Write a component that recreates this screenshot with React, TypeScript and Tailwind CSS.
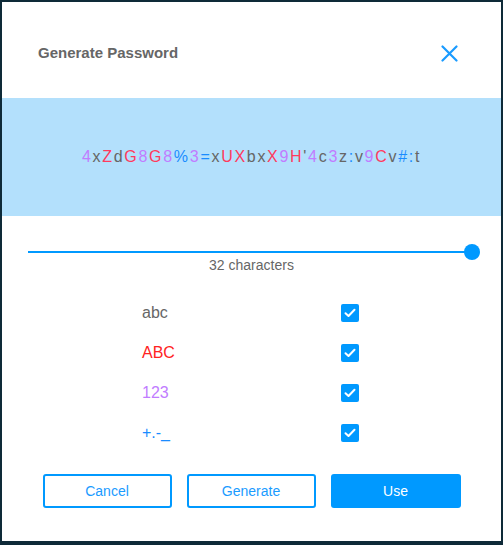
import React from "react";

const PW = "4xZdG8G8%3=xUXbxX9H'4c3z:v9Cv#:t";

function colorFor(c: string): string {
  if (/[0-9]/.test(c)) return "text-[#c17cff]";
  if (/[A-Z]/.test(c)) return "text-[#ff3a5e]";
  if (/[a-z]/.test(c)) return "text-[#666666]";
  if (c === "'") return "text-[#666666]";
  return "text-[#1a8cff]";
}

function Check() {
  return (
    <div className="w-[18px] h-[18px] rounded-[2px] bg-[#0099ff] flex items-center justify-center">
      <svg width="12" height="10" viewBox="0 0 12 10" fill="none">
        <path d="M1.5 5.2 L4.5 8 L10.5 1.8" stroke="white" strokeWidth="2" strokeLinecap="round" strokeLinejoin="round" />
      </svg>
    </div>
  );
}

export default function App() {
  const rows = [
    { label: "abc", cls: "text-[#666666]" },
    { label: "ABC", cls: "text-[#ff2222]" },
    { label: "123", cls: "text-[#c17cff]" },
    { label: "+.-_", cls: "text-[#1a8cff]" },
  ];
  return (
    <div
      className="w-[503px] h-[545px] bg-[#0e2a38] pt-[2px] pl-[2px] pr-[2px]"
      style={{ fontFamily: '"Liberation Sans", Arial, sans-serif' }}
    >
      <div className="w-[499px] h-[539px] bg-white flex flex-col">
        <div className="h-[96px] flex items-center justify-between pl-[36px] pr-[43px] pt-[7px]">
          <div className="text-[15px] font-bold text-[#666666]">Generate Password</div>
          <svg width="17" height="17" viewBox="0 0 17 17">
            <path d="M1.5 1.5 L15.5 15.5 M15.5 1.5 L1.5 15.5" stroke="#1a9bff" strokeWidth="2.2" strokeLinecap="round" />
          </svg>
        </div>
        <div className="h-[118px] bg-[#b3e0fc] flex items-center justify-center">
          <div className="text-[16px] tracking-[1.7px] leading-none">
            {PW.split("").map((c, i) => (
              <span key={i} className={colorFor(c)}>
                {c}
              </span>
            ))}
          </div>
        </div>
        <div className="mt-[28px] ml-[26px] mr-[29px] h-[16px] relative flex items-center">
          <div className="h-[2px] w-full bg-[#0099ff]" />
          <div className="absolute right-[-8px] top-0 w-[16px] h-[16px] rounded-full bg-[#0099ff]" />
        </div>
        <div className="-mt-[3px] text-center text-[14px] leading-[16px] text-[#666666]">32 characters</div>
        <div className="mt-[20px] flex flex-col">
          {rows.map((r) => (
            <div key={r.label} className="h-[40px] ml-[140px] w-[217px] flex items-center justify-between">
              <span className={`text-[16px] ${r.cls}`}>{r.label}</span>
              <Check />
            </div>
          ))}
        </div>
        <div className="mt-[21px] flex justify-center gap-[15px]">
          <button className="w-[129px] h-[34px] border-2 border-[#0099ff] rounded-[3px] text-[14px] text-[#1a9bff] bg-white">Cancel</button>
          <button className="w-[129px] h-[34px] border-2 border-[#0099ff] rounded-[3px] text-[14px] text-[#1a9bff] bg-white">Generate</button>
          <button className="w-[130px] h-[34px] rounded-[3px] text-[14px] text-white bg-[#0099ff]">Use</button>
        </div>
      </div>
    </div>
  );
}
